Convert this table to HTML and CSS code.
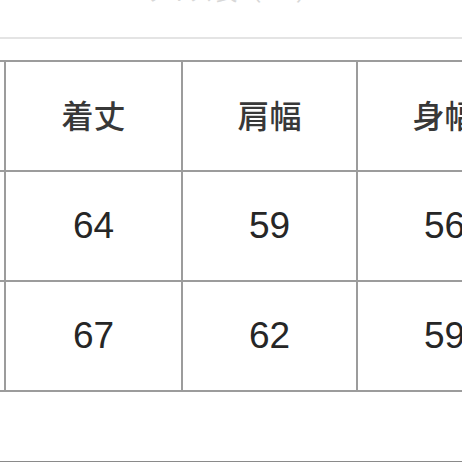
FILE: index.html
```html
<!DOCTYPE html>
<html lang="ja">
<head>
<meta charset="utf-8">
<link rel="stylesheet" href="styles.css">
</head>
<body>
<div class="page">
  <div class="caption">サイズ表（cm）</div>
  <table class="size-table">
    <colgroup>
      <col class="c0"><col class="c1"><col class="c2"><col class="c3">
    </colgroup>
    <tr class="head">
      <td class="label">サイズ</td><td>着丈</td><td>肩幅</td><td>身幅</td>
    </tr>
    <tr class="num">
      <td class="label">M</td><td>64</td><td>59</td><td>56</td>
    </tr>
    <tr class="num">
      <td class="label">L</td><td>67</td><td>62</td><td>59</td>
    </tr>
  </table>
  <div class="footer"></div>
</div>
</body>
</html>
```
FILE: styles.css
```css
html, body {
  margin: 0;
  padding: 0;
  background: #ffffff;
}
.page {
  width: 462px;
  height: 462px;
  overflow: hidden;
  position: relative;
}
.caption {
  margin-top: -25px;
  height: 64px;
  box-sizing: border-box;
  font-family: "Noto Sans CJK JP", sans-serif;
  font-size: 24px;
  line-height: 30px;
  color: #d8d8d8;
  text-align: center;
  border-bottom: 2px solid #e4e4e4;
}
.size-table {
  margin-top: 21px;
  margin-left: -172px;
  border-collapse: collapse;
  table-layout: fixed;
  width: 703px;
}
.c0 { width: 176px; }
.c1 { width: 177px; }
.c2 { width: 175px; }
.c3 { width: 175px; }
.size-table td {
  border: 2px solid #9c9c9c;
  height: 108px;
  padding: 0;
  text-align: center;
  vertical-align: middle;
}
.head td {
  font-family: "Noto Sans CJK JP", sans-serif;
  font-size: 32px;
  font-weight: 500;
  color: #383838;
  padding-bottom: 4px;
  height: 104px;
}
.num td {
  font-family: "Liberation Sans", Arial, sans-serif;
  font-size: 37px;
  color: #262626;
}
.footer {
  position: absolute;
  left: 0;
  right: 0;
  bottom: 0;
  height: 1px;
  background: #8a8a8a;
}
```
